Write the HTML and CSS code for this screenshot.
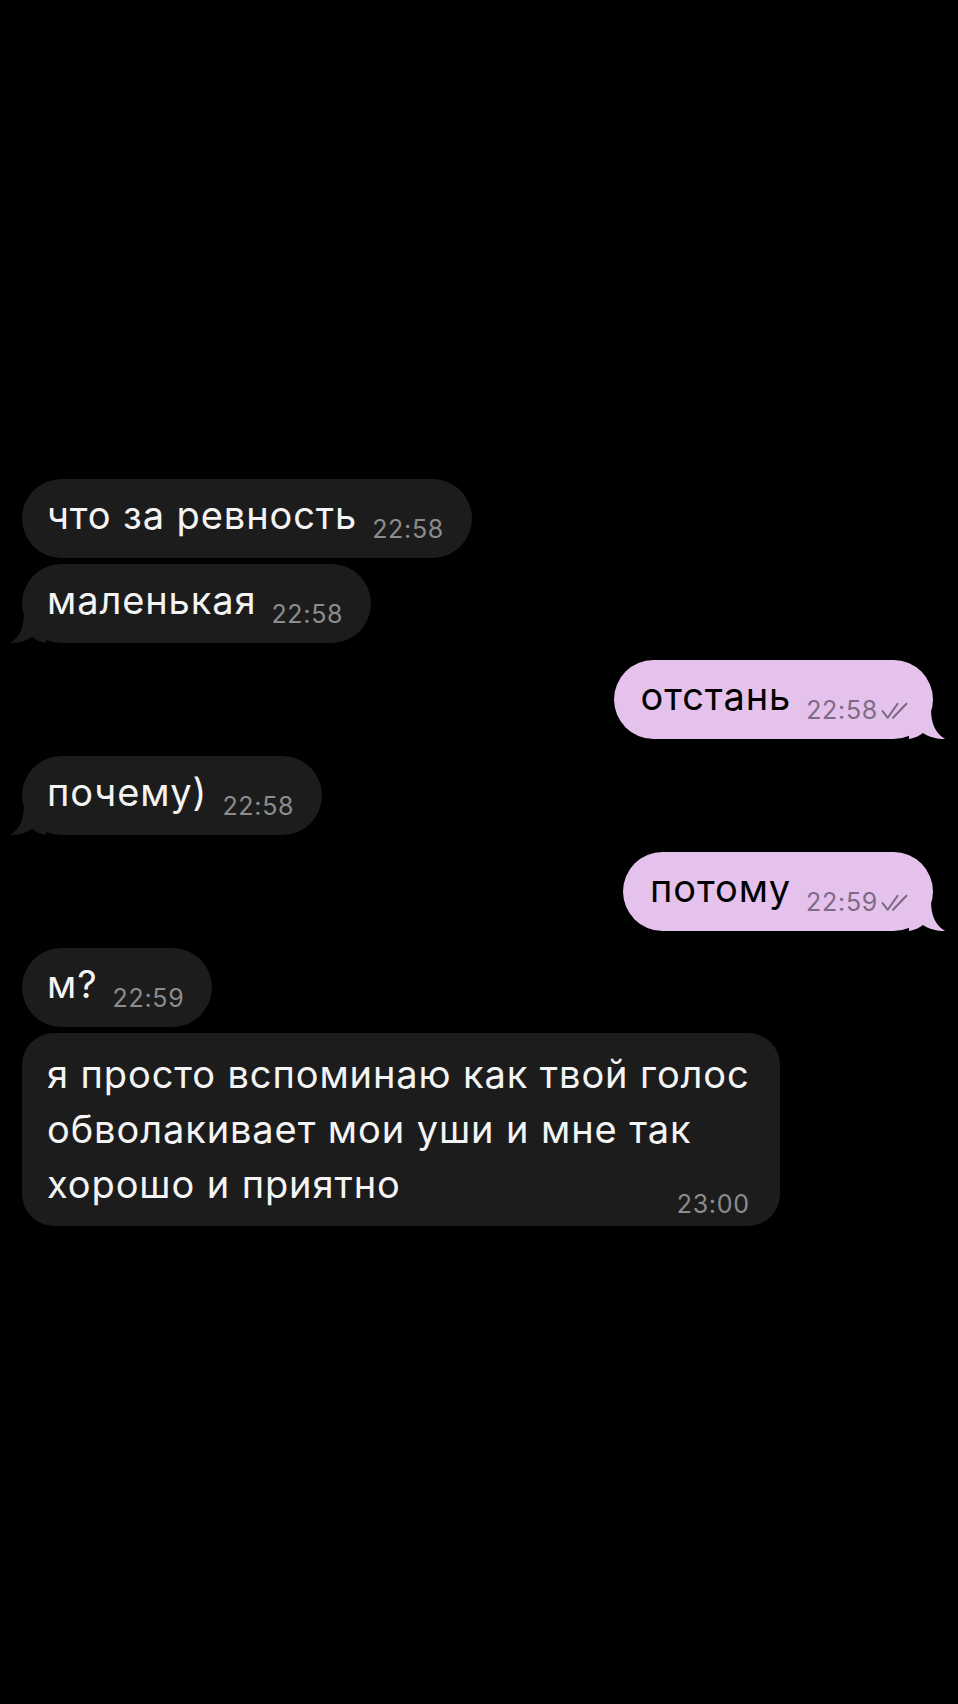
FILE: index.html
```html
<!DOCTYPE html>
<html lang="ru">
<head>
    <meta charset="UTF-8">
    <meta name="viewport" content="width=device-width, initial-scale=1.0">
    <title>Чат</title>
    <link rel="stylesheet" href="styles.css">
</head>
<body>
    <div class="chat">
        <div class="group in">
            <div class="bubble">
                <span class="text">что за ревность</span>
                <span class="time">22:58</span>
            </div>
            <div class="bubble tail">
                <span class="text">маленькая</span>
                <span class="time">22:58</span>
                <svg class="tail-shape" viewBox="0 0 36 30"><path d="M14 0 C14 14 10 24 0 30 C8 30 16 28 22 24 C26 27 30 29 36 30 L36 0 Z"/></svg>
            </div>
        </div>

        <div class="group out">
            <div class="bubble tail">
                <span class="text">отстань</span>
                <span class="time">22:58<svg class="ticks" viewBox="0 0 26 18"><path d="M1.5 9.5 L6.5 16 L16 2.5 M11.5 16 L24.5 2.5"/></svg></span>
                <svg class="tail-shape" viewBox="0 0 36 30"><path d="M14 0 C14 14 10 24 0 30 C8 30 16 28 22 24 C26 27 30 29 36 30 L36 0 Z"/></svg>
            </div>
        </div>

        <div class="group in">
            <div class="bubble tail">
                <span class="text">почему)</span>
                <span class="time">22:58</span>
                <svg class="tail-shape" viewBox="0 0 36 30"><path d="M14 0 C14 14 10 24 0 30 C8 30 16 28 22 24 C26 27 30 29 36 30 L36 0 Z"/></svg>
            </div>
        </div>

        <div class="group out">
            <div class="bubble tail">
                <span class="text">потому</span>
                <span class="time">22:59<svg class="ticks" viewBox="0 0 26 18"><path d="M1.5 9.5 L6.5 16 L16 2.5 M11.5 16 L24.5 2.5"/></svg></span>
                <svg class="tail-shape" viewBox="0 0 36 30"><path d="M14 0 C14 14 10 24 0 30 C8 30 16 28 22 24 C26 27 30 29 36 30 L36 0 Z"/></svg>
            </div>
        </div>

        <div class="group in">
            <div class="bubble">
                <span class="text">м?</span>
                <span class="time">22:59</span>
            </div>
            <div class="bubble long">
                <span class="text">я просто вспоминаю как твой голос<br>обволакивает мои уши и мне так<br>хорошо и приятно</span>
                <span class="time">23:00</span>
            </div>
        </div>
    </div>
</body>
</html>
```

FILE: styles.css
```css
body {
    margin: 0;
    background: #000;
    font-family: 'Inter', 'Liberation Sans', sans-serif;
    min-height: 1704px;
}

.chat {
    display: flex;
    flex-direction: column;
    gap: 17px;
    padding: 479px 25px 0 22px;
}

.group {
    display: flex;
    flex-direction: column;
    gap: 6px;
}

.group.in {
    align-items: flex-start;
}

.group.out {
    align-items: flex-end;
}

.bubble {
    position: relative;
    display: flex;
    align-items: flex-end;
    gap: 15px;
    padding: 13px 28px 20px 25px;
    border-radius: 40px;
    background: #1c1c1c;
    color: #f4f4f4;
}

.text {
    font-size: 38px;
    line-height: 46px;
    letter-spacing: 0.9px;
}

.time {
    display: flex;
    align-items: center;
    gap: 3px;
    font-size: 25px;
    line-height: 24px;
    margin-bottom: -3px;
    color: #8c8c8c;
    letter-spacing: 0.7px;
}

.out .bubble {
    background: #e5c2eb;
    color: #000;
    padding-left: 27px;
    padding-right: 25px;
}

.out .time {
    color: #7d6c86;
}

.ticks {
    width: 27px;
    height: 19px;
    fill: none;
    stroke: #7a6a83;
    stroke-width: 2;
    stroke-linecap: round;
    stroke-linejoin: round;
}

.tail-shape {
    position: absolute;
    bottom: 0;
    width: 36px;
    height: 30px;
    fill: #1c1c1c;
}

.in .tail-shape {
    left: -12px;
}

.out .tail-shape {
    right: -12px;
    fill: #e5c2eb;
    transform: scaleX(-1);
}

.bubble.long {
    flex-direction: column;
    align-items: stretch;
    gap: 0;
    padding: 14px 30px 10px 25px;
    border-radius: 32px;
}

.long .text {
    line-height: 55px;
}

.long .time {
    align-self: flex-end;
    margin-top: -20px;
    margin-bottom: 0;
}
```
